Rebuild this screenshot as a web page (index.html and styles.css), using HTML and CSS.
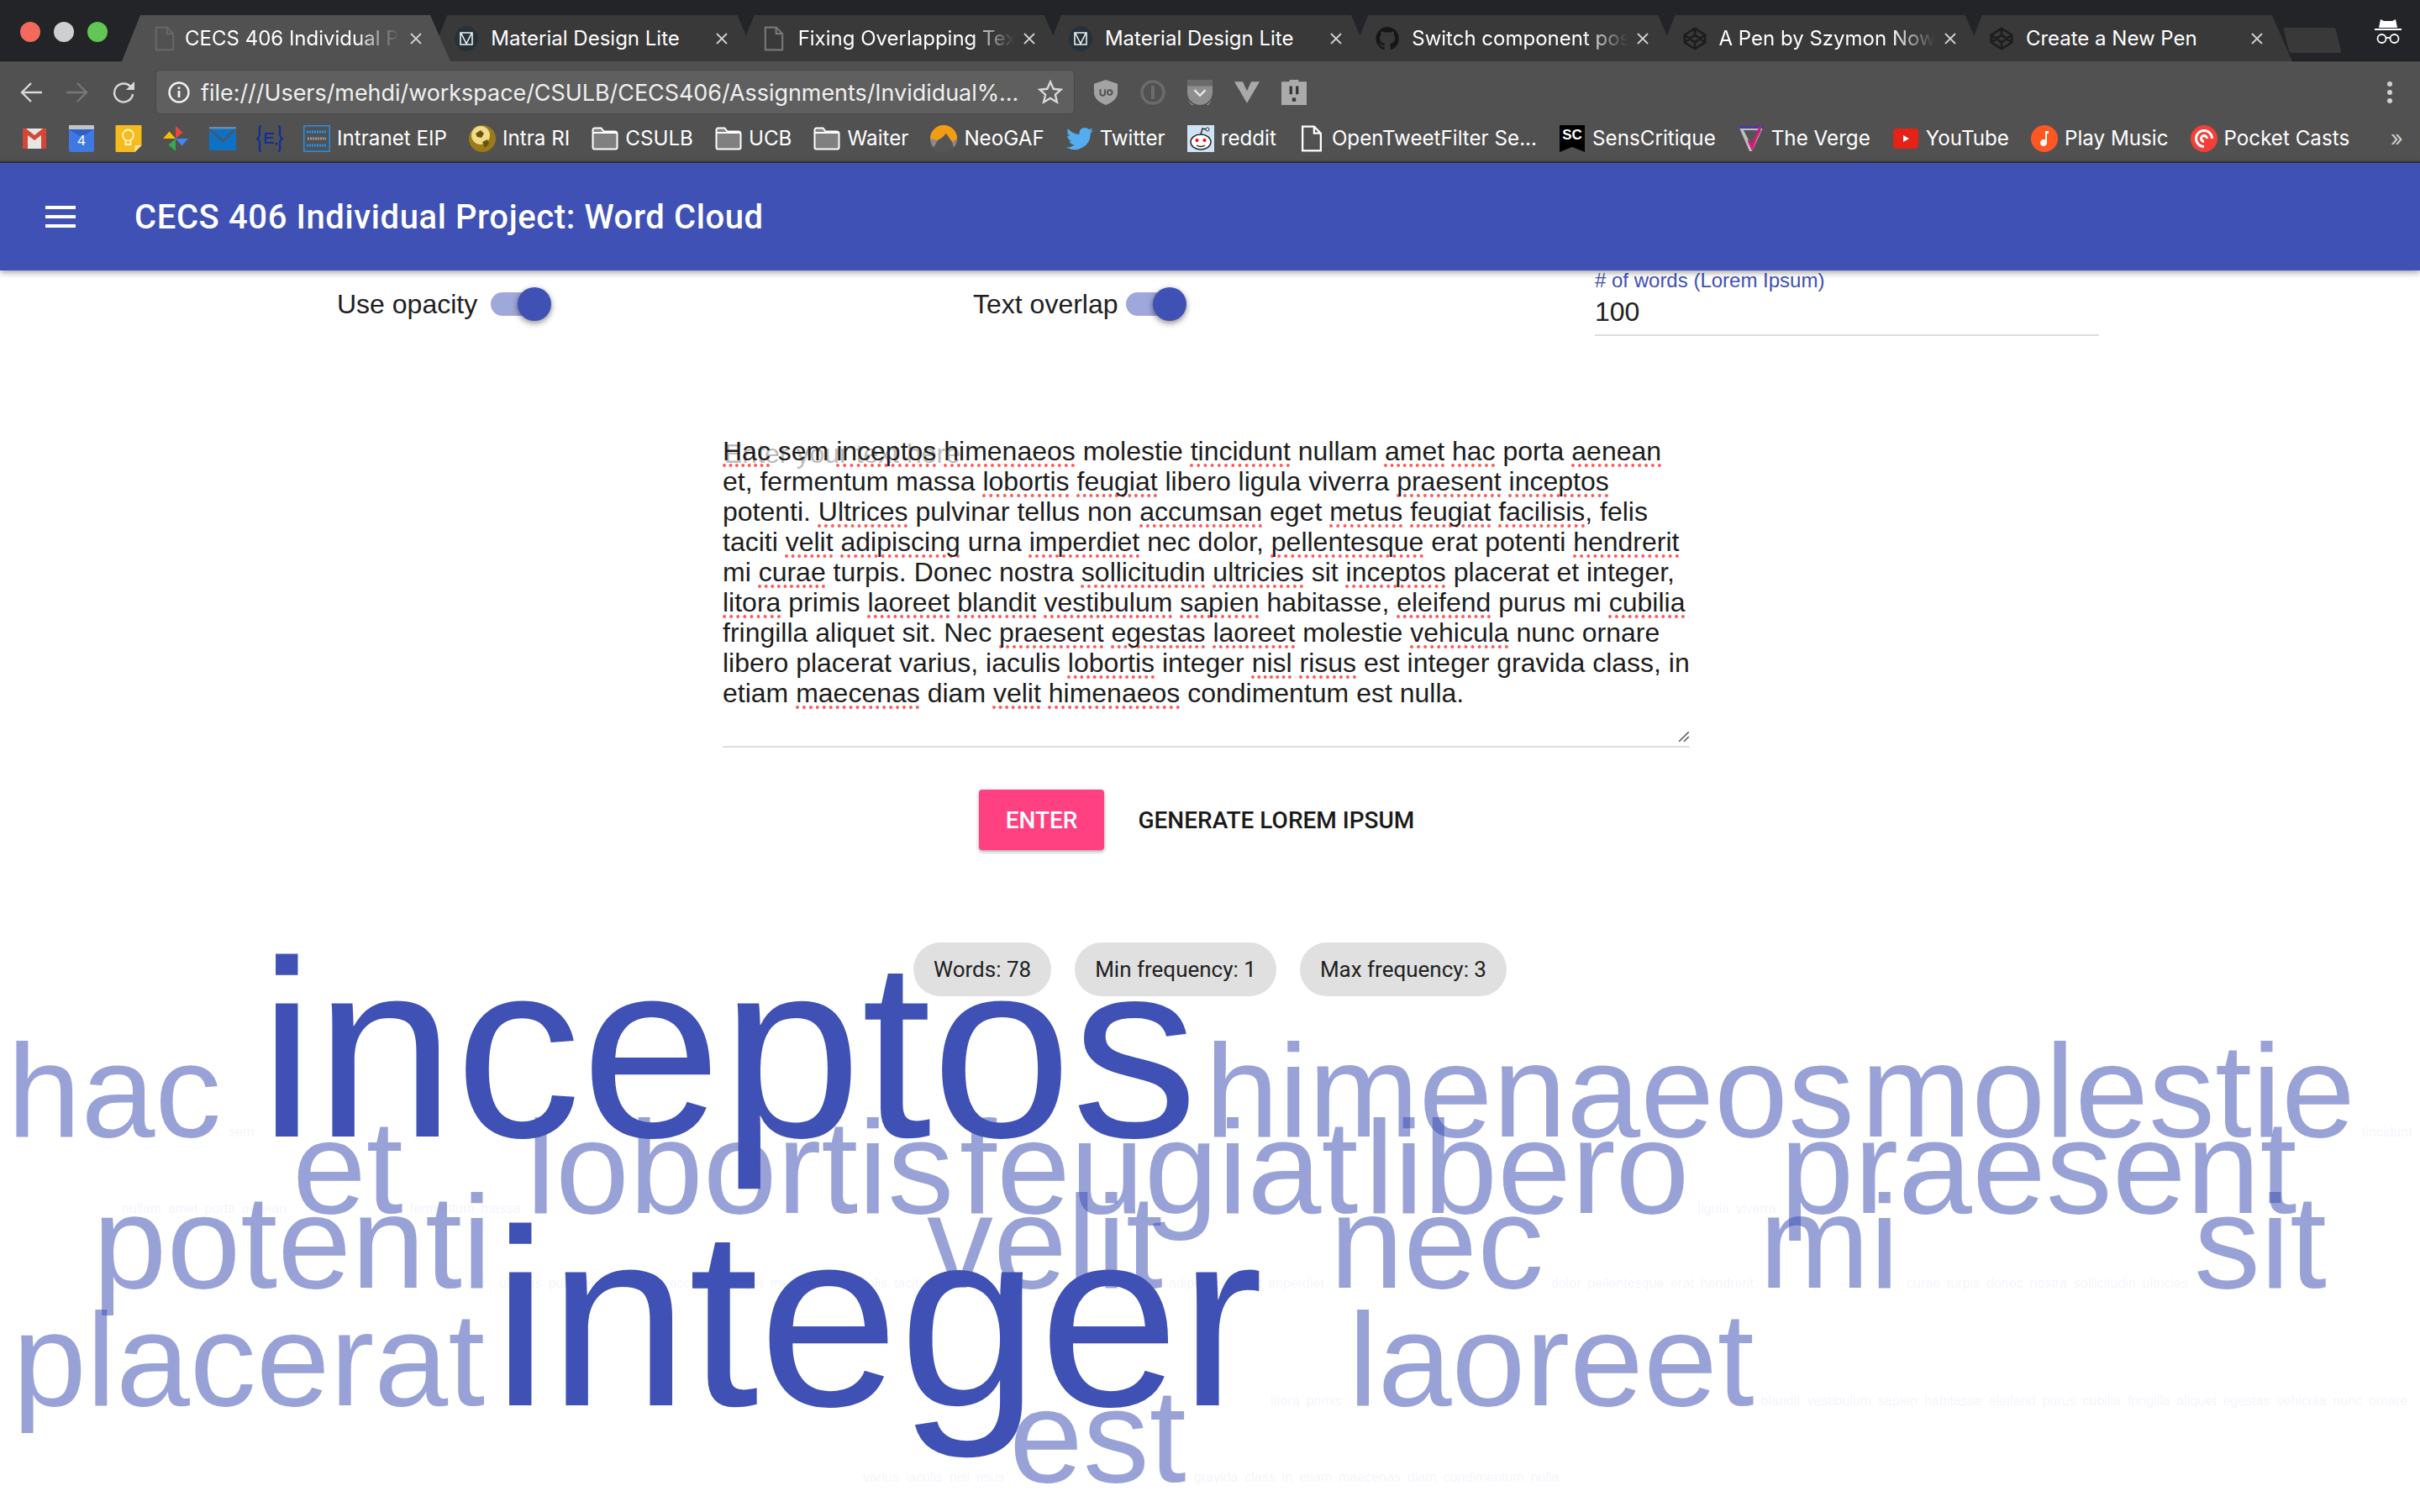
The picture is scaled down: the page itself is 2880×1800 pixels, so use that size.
FILE: index.html
```html
<!DOCTYPE html>
<html lang="en">
<head>
<meta charset="utf-8">
<title>CECS 406 Individual Project: Word Cloud</title>
<link rel="stylesheet" href="styles.css">
</head>
<body>
<svg class="defs" width="0" height="0" aria-hidden="true">
  <symbol id="doc" viewBox="0 0 22 28"><path d="M1.5 1.5h12l7 7v18h-19zM13.500 1.500v7h7" fill="none" stroke="currentColor" stroke-width="2"/></symbol>
  <symbol id="mdl" viewBox="0 0 28 30"><ellipse cx="14" cy="15" rx="14" ry="15" fill="#263238"/><path d="M7 8h14v14H7zM8 9l6 12 6-12" fill="none" stroke="#eceff1" stroke-width="1.600"/></symbol>
  <symbol id="pen" viewBox="0 0 32 32"><g fill="none" stroke="#1d1d1d" stroke-width="3" stroke-linejoin="round"><path d="M16 2 30 11v10L16 30 2 21V11zM16 2v9M16 21v9M2 11l14 10 14-10M2 21l14-10 14 10"/></g></symbol>
  <symbol id="folder" viewBox="0 0 32 28"><path d="M1.500 3.500a2 2 0 0 1 2-2h8l3 4h13a3 3 0 0 1 3 3v16a2 2 0 0 1-2 2h-25a2 2 0 0 1-2-2z" fill="#808080" stroke="#fff" stroke-width="2"/><path d="M2 7h28" stroke="#fff" stroke-width="2"/></symbol>
  <symbol id="x" viewBox="0 0 14 14"><path d="M1 1l12 12M13 1 1 13" stroke="#d0d0d0" stroke-width="1.800" fill="none"/></symbol>
</svg>

<header class="chrome">
  <div class="tabstrip">
    <div class="lights"><i class="light red"></i><i class="light grey"></i><i class="light green"></i></div>
    <div class="tab active">
      <svg class="fav doc-dim"><use href="#doc"/></svg>
      <span class="tab-title fade">CECS 406 Individual Project: Word Cloud</span>
      <svg class="close"><use href="#x"/></svg>
    </div>
    <div class="tab">
      <svg class="fav"><use href="#mdl"/></svg>
      <span class="tab-title">Material Design Lite</span>
      <svg class="close"><use href="#x"/></svg>
    </div>
    <div class="tab">
      <svg class="fav doc-mid"><use href="#doc"/></svg>
      <span class="tab-title fade">Fixing Overlapping Text</span>
      <svg class="close"><use href="#x"/></svg>
    </div>
    <div class="tab">
      <svg class="fav"><use href="#mdl"/></svg>
      <span class="tab-title">Material Design Lite</span>
      <svg class="close"><use href="#x"/></svg>
    </div>
    <div class="tab">
      <svg class="fav" viewBox="0 0 32 32"><path fill="#161616" d="M16 0a16 16 0 0 0-5 31c.8.100 1.100-.300 1.100-.800v-3c-4.500 1-5.400-2-5.400-2-.700-1.800-1.800-2.300-1.800-2.300-1.400-1 .100-1 .100-1 1.600.100 2.500 1.700 2.500 1.700 1.400 2.500 3.800 1.800 4.700 1.400.100-1 .600-1.800 1-2.200-3.600-.400-7.300-1.800-7.300-8 0-1.800.600-3.200 1.700-4.300-.200-.400-.700-2 .200-4.300 0 0 1.400-.400 4.400 1.600a15 15 0 0 1 8 0c3-2 4.400-1.600 4.400-1.600.900 2.300.300 3.900.200 4.300 1 1.100 1.700 2.500 1.700 4.300 0 6.200-3.800 7.600-7.400 8 .600.500 1.100 1.500 1.100 3v4.400c0 .500.300.900 1.100.800A16 16 0 0 0 16 0z"/></svg>
      <span class="tab-title fade">Switch component position</span>
      <svg class="close"><use href="#x"/></svg>
    </div>
    <div class="tab">
      <svg class="fav"><use href="#pen"/></svg>
      <span class="tab-title fade">A Pen by Szymon Nowak</span>
      <svg class="close"><use href="#x"/></svg>
    </div>
    <div class="tab">
      <svg class="fav"><use href="#pen"/></svg>
      <span class="tab-title">Create a New Pen</span>
      <svg class="close"><use href="#x"/></svg>
    </div>
    <div class="newtab"></div>
    <svg class="incognito" viewBox="0 0 32 30"><path fill="#fff" d="M7 0l4 2h10l4-2 2 10H5zM0 11h32v2H0z"/><circle cx="8.500" cy="23" r="5" fill="none" stroke="#fff" stroke-width="1.800"/><circle cx="23.500" cy="23" r="5" fill="none" stroke="#fff" stroke-width="1.800"/><path d="M13.500 22h5" stroke="#fff" stroke-width="1.800"/></svg>
  </div>

  <div class="toolbar">
    <svg class="nav" viewBox="0 0 28 26"><path d="M27 13H3M14 2 3 13l11 11" fill="none" stroke="#d8d8d8" stroke-width="2.400"/></svg>
    <svg class="nav" viewBox="0 0 28 26"><path d="M1 13h24M14 2l11 11-11 11" fill="none" stroke="#777" stroke-width="2.400"/></svg>
    <svg class="nav" viewBox="0 0 28 26"><path d="M23 7A11 11 0 1 0 25 15" fill="none" stroke="#d8d8d8" stroke-width="2.400"/><path d="M27 0v10H17z" fill="#d8d8d8"/></svg>
    <div class="omnibox">
      <svg class="info" viewBox="0 0 26 26"><circle cx="13" cy="13" r="11.500" fill="none" stroke="#f2f2f2" stroke-width="2.400"/><path d="M13 11v8M13 6.500v2.500" stroke="#f2f2f2" stroke-width="2.800"/></svg>
      <span class="url">file:///Users/mehdi/workspace/CSULB/CECS406/Assignments/Invididual%...</span>
      <svg class="star" viewBox="0 0 30 30"><path d="M15 2.500l3.700 8.300 9 .900-6.800 6 2 8.800L15 22l-7.900 4.500 2-8.800-6.800-6 9-.900z" fill="none" stroke="#d8d8d8" stroke-width="2.400"/></svg>
    </div>
    <div class="exts">
      <svg class="ext" viewBox="0 0 30 32"><path fill="#a3a3a3" d="M15 0l15 5v11c0 8-7 13-15 16C7 29 0 24 0 16V5z"/><path d="M8 12v5a3 3 0 0 0 6 0v-5M17 16a3 3 0 1 0 6 0 3 3 0 1 0-6 0" fill="none" stroke="#515151" stroke-width="2"/></svg>
      <svg class="ext" viewBox="0 0 30 30"><circle cx="15" cy="15" r="13" fill="none" stroke="#6b6b6b" stroke-width="3.500"/><path d="M15 7v16" stroke="#6b6b6b" stroke-width="4"/></svg>
      <svg class="ext" viewBox="0 0 32 32"><path fill="#8e8e8e" d="M0 2a2 2 0 0 1 2-2h28a2 2 0 0 1 2 2v14a16 16 0 0 1-32 0z"/><path d="M0 8V3a3 3 0 0 1 3-3h26a3 3 0 0 1 3 3v5z" fill="#6a6a6a"/><path d="M1 25a16 16 0 0 0 30 0 16 14 0 0 1-30 0z" fill="#eee"/><path d="M9 13l7 7 7-7" fill="none" stroke="#e8e8e8" stroke-width="2.500"/></svg>
      <svg class="ext" viewBox="0 0 33 28"><path fill="#a9a9a9" d="M0 0h11l5.500 12L22 0h11L16.500 28z"/></svg>
      <svg class="ext" viewBox="0 0 28 28"><path fill="#ababab" d="M0 2h9V0h10v2h9v26H0z"/><path d="M9 7h3v9H9zM16 7h3v9h-3zM12 20h4v4h-4z" fill="#333"/></svg>
    </div>
    <div class="menu-dots"><i></i><i></i><i></i></div>
  </div>

  <nav class="bookmarks">
    <svg class="bmi narrow" viewBox="0 0 28 28"><rect y="2" width="28" height="24" rx="2" fill="#e8e6e3"/><path d="M0 26V3a1 1 0 0 1 1-1h3l10 8 10-8h3a1 1 0 0 1 1 1v23h-6V10l-8 6-8-6v16z" fill="#d44638"/></svg>
    <svg class="bmi solo" viewBox="0 0 30 32"><rect width="30" height="32" rx="2" fill="#3f78e0"/><rect width="30" height="5" rx="1" fill="#c4c4c4"/><path d="M0 5h30l-15 9z" fill="#2f5fc4"/><text class="cal-num" x="15" y="24" text-anchor="middle">4</text></svg>
    <svg class="bmi solo" viewBox="0 0 31 32"><path d="M1 0h29a1 1 0 0 1 1 1v23l-8 8H1a1 1 0 0 1-1-1V1a1 1 0 0 1 1-1z" fill="#f8bb1c"/><path d="M31 24l-8 8v-8z" fill="#fbe4a0"/><circle cx="15" cy="12" r="6.500" fill="none" stroke="#fff3cc" stroke-width="1.800"/><path d="M12 18v5h6v-5" fill="none" stroke="#fff3cc" stroke-width="1.800"/></svg>
    <svg class="bmi solo" viewBox="0 0 30 30"><path d="M15 15V1l8 7z" fill="#e8453c"/><path d="M15 15h14l-7 8z" fill="#4285f4"/><path d="M15 15v14l-8-7z" fill="#34a853"/><path d="M15 15H1l7-8z" fill="#fbbc05"/></svg>
    <svg class="bmi solo" viewBox="0 0 32 28"><rect y="0" width="32" height="28" fill="#0f71c4"/><rect width="32" height="2.500" fill="#6f8ba3"/><path d="M1 3l15 14L31 3" fill="none" stroke="#46586a" stroke-width="2.500"/></svg>
    <svg class="bmi solo" viewBox="0 0 32 32"><g fill="none" stroke="#0f2f9c" stroke-width="2.200"><path d="M6 1C3 1 4 4 4 10c0 4-1 5-3 6 2 1 3 2 3 6 0 6-1 9 2 9M26 1c3 0 2 3 2 9 0 4 1 5 3 6-2 1-3 2-3 6 0 6 1 9-2 9M21 10H11v11h10M11 15h9"/></g><circle cx="24" cy="22" r="1.500" fill="#0f2f9c"/></svg>
    <a class="bm"><svg class="bmi" viewBox="0 0 32 32"><rect x=".8" y=".8" width="30.400" height="30.400" fill="none" stroke="#2196f3" stroke-width="1.400"/><path d="M4 8h24M4 24h24" stroke="#2196f3" stroke-width="3" stroke-dasharray="2 1"/><path d="M5 16h22" stroke="#9e9e9e" stroke-width="3" stroke-dasharray="2 1"/></svg>Intranet EIP</a>
    <a class="bm"><svg class="bmi" viewBox="0 0 32 32"><circle cx="16" cy="16" r="16" fill="#9a7a1a"/><circle cx="14" cy="12" r="11" fill="#f0dc8a"/><path d="M8 10l6-4 4 4-3 5-5-1zM16 20l6-3 2 5-5 5z" fill="#6a5210"/></svg>Intra RI</a>
    <a class="bm"><svg class="bmi"><use href="#folder"/></svg>CSULB</a>
    <a class="bm"><svg class="bmi"><use href="#folder"/></svg>UCB</a>
    <a class="bm"><svg class="bmi"><use href="#folder"/></svg>Waiter</a>
    <a class="bm"><svg class="bmi" viewBox="0 0 32 32"><circle cx="16" cy="16" r="16" fill="#8a8a8a"/><path d="M0 16a16 16 0 0 1 32 0l-6 4-7-10-5 5-5 3z" fill="#f39c12"/><path d="M4 27l5-9 5-3 5-5 7 10 2 7a16 16 0 0 1-24 0z" fill="#555"/></svg>NeoGAF</a>
    <a class="bm"><svg class="bmi" viewBox="0 0 32 32"><path fill="#55acee" d="M32 6.100a13 13 0 0 1-3.800 1 6.600 6.600 0 0 0 2.900-3.600 13 13 0 0 1-4.200 1.600 6.600 6.600 0 0 0-11.200 6A18.600 18.600 0 0 1 2.200 4.200a6.600 6.600 0 0 0 2 8.800 6.500 6.500 0 0 1-3-.800 6.600 6.600 0 0 0 5.300 6.500 6.600 6.600 0 0 1-3 .100 6.600 6.600 0 0 0 6.100 4.600A13.200 13.200 0 0 1 0 26.100 18.600 18.600 0 0 0 28.700 9.600 13.300 13.300 0 0 0 32 6.100z"/></svg>Twitter</a>
    <a class="bm"><svg class="bmi" viewBox="0 0 32 32"><rect width="32" height="32" fill="#cee3f8"/><ellipse cx="16" cy="20" rx="12" ry="9" fill="#fff" stroke="#222" stroke-width="1.400"/><circle cx="11.500" cy="18" r="2" fill="#f00"/><circle cx="20.500" cy="18" r="2" fill="#f00"/><path d="M11 24q5 3 10 0M16 11l2-7 5 1" fill="none" stroke="#222" stroke-width="1.400"/><circle cx="24" cy="5" r="2" fill="#fff" stroke="#222"/></svg>reddit</a>
    <a class="bm"><svg class="bmi doc-white"><use href="#doc"/></svg>OpenTweetFilter Se...</a>
    <a class="bm"><svg class="bmi" viewBox="0 0 30 32"><path d="M0 0h30v32l-15-6-15 6z" fill="#000"/><text class="sc-text" x="15" y="17" text-anchor="middle">SC</text></svg>SensCritique</a>
    <a class="bm"><svg class="bmi" viewBox="0 0 32 32"><path d="M1 1h30L17 31h-3z" fill="#bdbdbd"/><path d="M1 1h30v3H2z" fill="#4a3aa8"/><path d="M7 6h21L17 26z" fill="#555"/><path d="M27 2 17 27 13 18" fill="none" stroke="#e5127d" stroke-width="3"/></svg>The Verge</a>
    <a class="bm"><svg class="bmi" viewBox="0 0 30 32"><rect y="4" width="30" height="24" rx="4" fill="#e62117"/><path d="M12 12l7 4-7 4z" fill="#fff"/></svg>YouTube</a>
    <a class="bm"><svg class="bmi" viewBox="0 0 32 32"><circle cx="16" cy="16" r="16" fill="#ff5722"/><path d="M17 7h4v3h-2v11a4 4 0 1 1-2-3.400z" fill="#fff"/></svg>Play Music</a>
    <a class="bm"><svg class="bmi" viewBox="0 0 32 32"><circle cx="16" cy="16" r="16" fill="#f43e37"/><path d="M16 27a11 11 0 1 1 11-11h-3a8 8 0 1 0-8 8z" fill="#fff"/><path d="M16 21a5 5 0 1 1 5-5h-3a2 2 0 1 0-2 2z" fill="#fff"/></svg>Pocket Casts</a>
    <span class="more">»</span>
  </nav>
</header>

<header class="appbar">
  <div class="burger"><i></i><i></i><i></i></div>
  <h1 class="app-title">CECS 406 Individual Project: Word Cloud</h1>
</header>

<main class="page">
  <section class="controls">
    <div class="switch-field"><span>Use opacity</span><span class="switch"><i></i></span></div>
    <div class="switch-field tight"><span>Text overlap</span><span class="switch"><i></i></span></div>
    <div class="num-field">
      <label># of words (Lorem Ipsum)</label>
      <div class="num-value">100</div>
    </div>
  </section>

  <section class="editor">
    <div class="placeholder">Enter your text here</div>
    <div class="editor-text"><span class="sp">Hac</span> sem <span class="sp">inceptos</span> <span class="sp">himenaeos</span> molestie <span class="sp">tincidunt</span> nullam <span class="sp">amet</span> <span class="sp">hac</span> porta <span class="sp">aenean</span> et, fermentum massa <span class="sp">lobortis</span> <span class="sp">feugiat</span> libero ligula viverra <span class="sp">praesent</span> <span class="sp">inceptos</span> potenti. <span class="sp">Ultrices</span> pulvinar tellus non <span class="sp">accumsan</span> eget <span class="sp">metus</span> <span class="sp">feugiat</span> <span class="sp">facilisis</span>, felis taciti <span class="sp">velit</span> <span class="sp">adipiscing</span> urna <span class="sp">imperdiet</span> nec dolor, <span class="sp">pellentesque</span> erat potenti <span class="sp">hendrerit</span> mi <span class="sp">curae</span> turpis. Donec nostra <span class="sp">sollicitudin</span> <span class="sp">ultricies</span> sit <span class="sp">inceptos</span> placerat et integer, <span class="sp">litora</span> primis <span class="sp">laoreet</span> <span class="sp">blandit</span> <span class="sp">vestibulum</span> <span class="sp">sapien</span> habitasse, <span class="sp">eleifend</span> purus mi <span class="sp">cubilia</span> fringilla aliquet sit. Nec <span class="sp">praesent</span> <span class="sp">egestas</span> <span class="sp">laoreet</span> molestie <span class="sp">vehicula</span> nunc ornare libero placerat varius, iaculis <span class="sp">lobortis</span> integer <span class="sp">nisl</span> <span class="sp">risus</span> est integer gravida class, in etiam <span class="sp">maecenas</span> diam <span class="sp">velit</span> <span class="sp">himenaeos</span> condimentum est nulla.</div>
    <svg class="grip" viewBox="0 0 12 12"><path d="M1 11 11 1M6 11l5-5" stroke="#555" stroke-width="1.300"/></svg>
  </section>

  <section class="actions">
    <button class="btn btn-primary">Enter</button>
    <button class="btn">Generate Lorem Ipsum</button>
  </section>

  <section class="chips">
    <span class="chip">Words: 78</span>
    <span class="chip">Min frequency: 1</span>
    <span class="chip">Max frequency: 3</span>
  </section>
</main>

<svg class="cloud" viewBox="0 0 2880 1800" aria-label="Word cloud">
  <text class="w2" x="8.600" y="1353">hac</text>
  <text class="w1" x="272" y="1353">sem</text>
  <text class="w3" x="308" y="1353">inceptos</text>
  <text class="w2" x="1434" y="1353">himenaeos</text>
  <text class="w2" x="2214.600" y="1353">molestie</text>
  <text class="w1" x="2811" y="1353">tincidunt</text>

  <text class="w1" x="145" y="1444">nullam amet porta aenean</text>
  <text class="w2" x="348" y="1444">et</text>
  <text class="w1" x="488" y="1444">fermentum massa</text>
  <text class="w2" x="626" y="1444">lobortis</text>
  <text class="w2" x="1142" y="1444">feugiat</text>
  <text class="w2" x="1624" y="1444">libero</text>
  <text class="w1" x="2020.600" y="1444">ligula viverra</text>
  <text class="w2" x="2118.600" y="1444">praesent</text>

  <text class="w2" x="110.600" y="1533">potenti</text>
  <text class="w1" x="594" y="1533">ultrices pulvinar tellus non accumsan eget metus facilisis felis taciti</text>
  <text class="w2" x="1103" y="1533">velit</text>
  <text class="w1" x="1391" y="1533">adipiscing urna imperdiet</text>
  <text class="w2" x="1582.500" y="1533">nec</text>
  <text class="w1" x="1846" y="1533">dolor pellentesque erat hendrerit</text>
  <text class="w2" x="2093.600" y="1533">mi</text>
  <text class="w1" x="2269" y="1533">curae turpis donec nostra sollicitudin ultricies</text>
  <text class="w2" x="2611" y="1533">sit</text>

  <text class="w2" x="15" y="1673">placerat</text>
  <text class="w3" x="586" y="1673">integer</text>
  <text class="w1" x="1512" y="1673">litora primis</text>
  <text class="w2" x="1604.600" y="1673">laoreet</text>
  <text class="w1" x="2095.600" y="1673">blandit vestibulum sapien habitasse eleifend purus cubilia fringilla aliquet egestas vehicula nunc ornare</text>

  <text class="w1" x="1027" y="1764">varius iaculis nisl risus</text>
  <text class="w2" x="1201" y="1764">est</text>
  <text class="w1" x="1421" y="1764">gravida class in etiam maecenas diam condimentum nulla</text>
</svg>
</body>
</html>
```

FILE: styles.css
```css
* { box-sizing: border-box; }
html, body { margin: 0; padding: 0; }
body {
  width: 2880px;
  height: 1800px;
  overflow: hidden;
  position: relative;
  background: #fff;
  font-family: Roboto, "Liberation Sans", sans-serif;
  color: #212121;
}
.defs { position: absolute; }

/* browser chrome */
.chrome { font-family: Inter, "Liberation Sans", sans-serif; color: #fff; }
.tabstrip {
  display: flex;
  align-items: flex-start;
  height: 73px;
  padding-top: 18px;
  background: #232427;
  border-bottom: 1px solid #1b1b1b;
}
.lights { display: flex; gap: 16px; width: 145px; padding: 8px 0 0 24px; flex: none; }
.light { width: 24px; height: 24px; border-radius: 50%; }
.red { background: #f4695e; }
.grey { background: #cfcfcf; }
.green { background: #62c655; }
.tab {
  position: relative;
  display: flex;
  align-items: center;
  flex: none;
  width: 391px;
  height: 55px;
  margin-right: -25.7px;
  padding-left: 31px;
  background: #393939;
  clip-path: polygon(22px 0, calc(100% - 24px) 0, 100% 100%, 0 100%);
}
.tab.active { z-index: 1; background: #515151; padding-left: 37px; }
.fav { width: 28px; height: 30px; flex: none; }
.doc-dim { color: #666; }
.doc-mid { color: #777; }
.doc-white { color: #fff; }
.tab-title {
  width: 257px;
  margin-left: 15px;
  font-size: 24px;
  white-space: nowrap;
  overflow: hidden;
}
.active .tab-title { width: 255px; margin-left: 10px; }
.active .close { margin-left: 13px; }
.tab-title.fade {
  -webkit-mask-image: linear-gradient(to right, #000 80%, transparent 100%);
  mask-image: linear-gradient(to right, #000 80%, transparent 100%);
}
.close { width: 14px; height: 14px; margin-left: 11px; flex: none; }
.newtab {
  width: 62px;
  height: 30px;
  margin: 15px 0 0 19px;
  background: #393939;
  border-radius: 3px;
  transform: skewX(14deg);
  flex: none;
}
.incognito { width: 32px; height: 30px; margin: 5px 0 0 43px; flex: none; }

.toolbar {
  display: flex;
  align-items: center;
  height: 64px;
  padding: 9px 0 0 23px;
  background: #515151;
}
.nav { width: 28px; height: 26px; margin-right: 27px; flex: none; }
.nav:nth-child(3) { margin-right: 24px; }
.omnibox {
  display: flex;
  align-items: center;
  width: 1094px;
  height: 53px;
  padding-left: 14px;
  background: #5f5f5f;
  border: 1px solid #484848;
  border-radius: 6px;
  flex: none;
}
.info { width: 26px; height: 26px; flex: none; }
.url { width: 990px; margin-left: 13px; font-size: 26.9px; color: #f0f0f0; white-space: nowrap; }
.star { width: 30px; height: 30px; margin-left: 6px; flex: none; }
.exts { display: flex; align-items: center; gap: 26px; margin-left: 22px; }
.ext { width: 30px; height: 30px; flex: none; }
.menu-dots { display: flex; flex-direction: column; gap: 4px; margin-left: auto; margin-right: 33px; }
.menu-dots i { width: 6px; height: 6px; border-radius: 50%; background: #d0d0d0; }

.bookmarks {
  display: flex;
  align-items: center;
  gap: 26px;
  height: 57px;
  padding-left: 27px;
  background: #515151;
  border-bottom: 2px solid #333;
  font-size: 24.2px;
  white-space: nowrap;
}
.bm { display: flex; align-items: center; gap: 8px; }
.bmi { width: 32px; height: 32px; flex: none; }
.solo { margin-right: -2px; }
.narrow { width: 28px; }
.cal-num { font: 17px "Liberation Sans", sans-serif; fill: #fff; }
.sc-text { font: 700 17px "Liberation Sans", sans-serif; fill: #fff; }
.more { margin-left: auto; margin-right: 20px; color: #ccc; font-size: 26px; }

/* app bar */
.appbar {
  position: relative;
  z-index: 2;
  display: flex;
  align-items: center;
  height: 128px;
  background: #3f51b5;
  color: #fff;
  box-shadow: 0 2px 8px rgba(0,0,0,.4);
}
.burger { display: flex; flex-direction: column; gap: 7px; width: 36px; margin-left: 54px; }
.burger i { height: 4px; background: #fff; }
.app-title { margin: 0 0 0 70px; font-size: 40px; font-weight: 500; letter-spacing: .6px; white-space: nowrap; }

/* page */
.page { position: relative; }
.controls {
  display: grid;
  grid-template-columns: 757px 739px 601px;
  height: 78px;
  padding-left: 401px;
  font-family: "Liberation Sans", sans-serif;
}
.switch-field { display: flex; align-items: center; gap: 16px; font-size: 32px; height: 80px; }
.switch-field.tight { gap: 9px; }
.switch { position: relative; display: block; width: 68px; height: 28px; border-radius: 14px; background: #9fa8da; }
.switch i {
  position: absolute;
  right: -4px;
  top: -6px;
  width: 40px;
  height: 40px;
  border-radius: 50%;
  background: #3f51b5;
  box-shadow: 0 2px 6px rgba(0,0,0,.35), 0 4px 8px rgba(0,0,0,.15);
}
.num-field { height: 78px; border-bottom: 2px solid #ddd; margin-left: 1px; }
.num-field label { display: block; margin-top: -2px; font-size: 24px; line-height: 28px; color: #3f51b5; }
.num-value { font-size: 32px; line-height: 40px; margin-top: 3px; }

.editor {
  position: relative;
  width: 1151px;
  height: 371px;
  margin: 119px 0 0 860px;
  font-family: "Liberation Sans", sans-serif;
  font-size: 32px;
  line-height: 36px;
  color: #1c1c1c;
  border-bottom: 2px solid #ddd;
}
.placeholder { position: absolute; left: 2px; top: 3px; color: #bbb; }
.editor-text { position: relative; }
.sp {
  text-decoration: underline dotted #ff5a5a 4px;
  text-underline-offset: 4px;
  text-decoration-skip-ink: none;
}
.grip { position: absolute; right: 0; bottom: 4px; width: 14px; height: 14px; }

.actions { display: flex; justify-content: center; gap: 8px; margin-top: 50px; }
.btn {
  height: 72px;
  padding: 0 32px;
  border: 0;
  border-radius: 4px;
  background: none;
  font-family: Roboto, sans-serif;
  font-size: 28px;
  font-weight: 500;
  text-transform: uppercase;
  color: #1a1a1a;
}
.btn-primary { background: #ff4081; color: #fff; box-shadow: 0 2px 4px rgba(0,0,0,.35); }

.chips { display: flex; justify-content: center; gap: 28px; margin-top: 110px; }
.chip {
  display: flex;
  align-items: center;
  height: 64px;
  padding: 0 24px;
  border-radius: 32px;
  background: #e0e0e0;
  font-size: 26px;
  color: #212121;
}

/* word cloud: a free canvas, each word sits at its own baseline */
.cloud {
  position: absolute;
  left: 0;
  top: 0;
  width: 2880px;
  height: 1800px;
  pointer-events: none;
  font-family: "Liberation Sans", sans-serif;
  fill: #3f51b5;
}
.w1 { font-size: 16px; opacity: .06; word-spacing: 3.5px; }
.w2 { font-size: 158px; opacity: .53; }
.w3 { font-size: 300px; }
```
